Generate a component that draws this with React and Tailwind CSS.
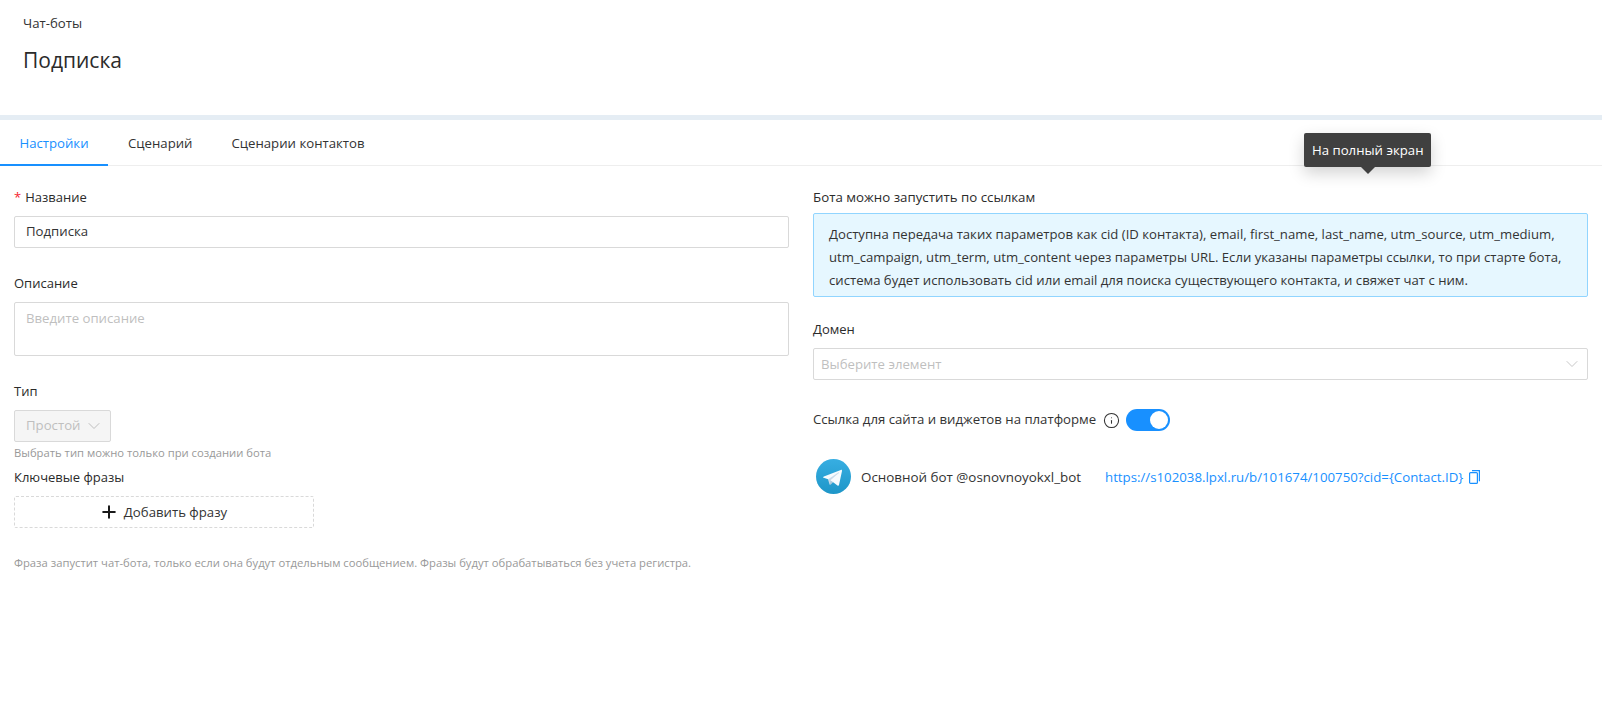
import React from 'react';
import { ChevronDown, Info, Plus } from 'lucide-react';

function Label({ children, className = '' }) {
  return <div className={`text-[13px] leading-[20px] text-[#2b2b2b] ${className}`}>{children}</div>;
}

function TelegramLogo() {
  return (
    <svg viewBox="0 0 36 36" className="h-[35px] w-[35px] shrink-0">
      <defs>
        <linearGradient id="tg" x1="0.5" y1="0" x2="0.5" y2="1">
          <stop offset="0" stopColor="#37aee2" />
          <stop offset="1" stopColor="#1e96c8" />
        </linearGradient>
      </defs>
      <circle cx="18" cy="18" r="18" fill="url(#tg)" />
      <path d="M14.5 26.5c-.6 0-.5-.2-.7-.8l-1.7-5.7L25.5 12" fill="#c8daea" />
      <path d="M14.5 26.5c.5 0 .7-.2 1-.5l2.4-2.3-3-1.8" fill="#a9c9dd" />
      <path d="M14.9 21.9l7.2 5.3c.8.5 1.4.2 1.6-.8l3-13.8c.3-1.2-.5-1.7-1.2-1.4L8.1 17.9c-1.2.5-1.2 1.1-.2 1.4l4.6 1.4 10.6-6.7c.5-.3 1-.1.6.2" fill="#f6fbfe" />
    </svg>
  );
}

function CopyIcon() {
  return (
    <svg viewBox="0 0 11 14" className="ml-[6px] h-[14px] w-[11px]" fill="none" stroke="#1890ff" strokeWidth="1.2">
      <rect x="0.6" y="2.6" width="7.8" height="10.8" rx="1" />
      <path d="M3 0.6h7.4v10.6" />
    </svg>
  );
}

export default function App() {
  return (
    <div className="relative min-h-[714px] bg-white font-['Open_Sans',sans-serif] text-[#2b2b2b]">
      <header className="h-[115px] pl-[23px] pt-[13px]">
        <div className="text-[13.2px] leading-[20px] text-[#333]">Чат-боты</div>
        <h1 className="mt-3 text-[21px] leading-[30px] font-normal text-[#2b2b2b]">Подписка</h1>
      </header>
      <div className="h-[5px] bg-[#e5edf4]" />

      <nav className="flex h-[46px] border-b border-[#eeeeee] text-[13.2px]">
        <div className="flex w-[108px] items-center justify-center border-b-2 border-[#1890ff] -mb-px pt-[3px] text-[#1890ff]">Настройки</div>
        <div className="flex items-center pl-5 pt-[3px] text-[#333]">Сценарий</div>
        <div className="flex items-center pl-[39px] pt-[3px] text-[#333]">Сценарии контактов</div>
      </nav>

      <main className="grid grid-cols-2 gap-x-6 px-[14px] pt-[21px]">
        <section>
          <Label><span className="mr-1 text-[#f5222d]">*</span>Название</Label>
          <div className="mt-[9px] flex h-8 items-center rounded-[2px] border border-[#d9d9d9] px-[11px] text-[13.2px] text-[#333]">Подписка</div>

          <Label className="mt-[25px]">Описание</Label>
          <div className="mt-[9px] h-[54px] rounded-[2px] border border-[#d9d9d9] px-[11px] py-[5px] text-[13.2px] leading-[20px] text-[#bfbfbf]">Введите описание</div>

          <Label className="mt-[25px]">Тип</Label>
          <div className="mt-[9px] flex h-8 w-[97px] items-center justify-between rounded-[2px] border border-[#d9d9d9] bg-[#f5f5f5] pl-[11px] pr-[6px] text-[13.2px] text-[#bfbfbf]">
            Простой
            <ChevronDown className="h-5 w-5" strokeWidth={1.2} />
          </div>
          <div className="mt-[2px] text-[11.25px] leading-[18px] text-[#999]">Выбрать тип можно только при создании бота</div>
          <Label className="mt-[5px]">Ключевые фразы</Label>
          <div className="mt-[9px] flex h-8 w-[300px] items-center justify-center gap-[5px] rounded-[2px] border border-dashed border-[#d9d9d9] pr-[2px] text-[13.2px] text-[#333]">
            <Plus className="h-5 w-5 text-[#1a1a1a]" strokeWidth={2.4} />
            <span className="pt-[2px]">Добавить фразу</span>
          </div>
          <div className="mt-[26px] text-[11.25px] leading-[18px] text-[#999]">
            Фраза запустит чат-бота, только если она будут отдельным сообщением. Фразы будут обрабатываться без учета регистра.
          </div>
        </section>

        <section>
          <div className="text-[13.3px] leading-[20px] text-[#2b2b2b]">Бота можно запустить по ссылкам</div>
          <div className="mt-[6px] rounded-[2px] border border-[#91d5ff] bg-[#e6f7ff] pt-[9px] pb-[4px] pl-[15px] pr-3 text-[13.15px] leading-[23px] text-[#333]">
            Доступна передача таких параметров как cid (ID контакта), email, first_name, last_name, utm_source, utm_medium, utm_campaign, utm_term, utm_content через параметры URL. Если указаны параметры ссылки, то при старте бота, система будет использовать cid или email для поиска существующего контакта, и свяжет чат с ним.
          </div>

          <Label className="mt-[22px]">Домен</Label>
          <div className="mt-[9px] flex h-8 items-center justify-between rounded-[2px] border border-[#d9d9d9] pl-[7px] pr-[5px] text-[13.2px] text-[#bfbfbf]">
            <span className="pt-[2px]">Выберите элемент</span>
            <ChevronDown className="h-5 w-5 text-[#c8c8c8]" strokeWidth={1.2} />
          </div>

          <div className="mt-[29px] flex items-center text-[13.2px] text-[#333]">
            Ссылка для сайта и виджетов на платформе
            <Info className="ml-[7px] h-[17px] w-[17px] text-[#333]" strokeWidth={1.5} />
            <div className="ml-[6px] flex h-[22px] w-11 items-center justify-end rounded-full bg-[#1890ff] pr-[2px]">
              <div className="h-[18px] w-[18px] rounded-full bg-white" />
            </div>
          </div>

          <div className="mt-[28px] flex items-center pl-[3px] text-[13.2px]">
            <TelegramLogo />
            <span className="ml-[10px] w-[244px] pt-[2px] text-[13.4px] text-[#333]">Основной бот @osnovnoyokxl_bot</span>
            <a className="pt-[2px] text-[13.25px] text-[#1890ff]">https://s102038.lpxl.ru/b/101674/100750?cid={'{'}Contact.ID{'}'}</a>
            <CopyIcon />
          </div>
        </section>
      </main>

      {/* tooltip over the tab bar */}
      <div className="absolute left-[1304px] top-[133px] rounded-[2px] bg-[#404040] px-2 py-[7px] text-[13.2px] leading-[20px] text-white shadow-[0_6px_16px_rgba(0,0,0,0.18)]">
        На полный экран
        <div className="absolute left-1/2 top-full h-0 w-0 -translate-x-1/2 border-x-[7px] border-t-[7px] border-x-transparent border-t-[#404040]" />
      </div>
    </div>
  );
}
